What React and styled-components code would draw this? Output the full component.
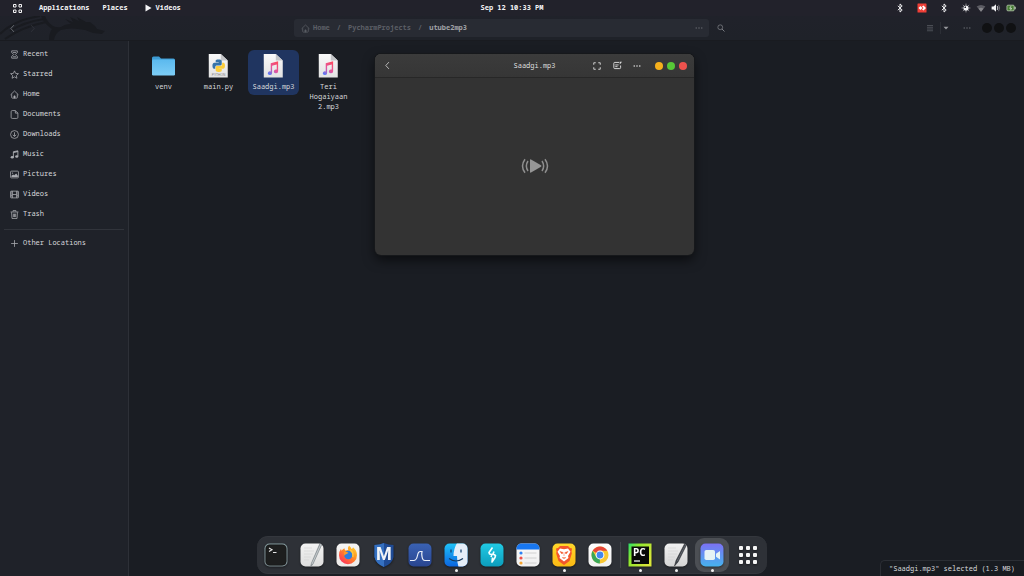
import React, { useState } from 'react';
import styled, { createGlobalStyle } from 'styled-components';

const GlobalStyle = createGlobalStyle`
  * {
    box-sizing: border-box;
  }

  html, body, #root {
    height: 100%;
    margin: 0;
  }

  body {
    background: #1a1d23;
    color: #d6d7da;
    font-family: 'Noto Sans Mono', 'DejaVu Sans Mono', monospace;
    font-size: 7px;
    line-height: 10px;
    overflow: hidden;
  }

  button {
    padding: 0;
    border: none;
    background: none;
    color: inherit;
    font: inherit;
    cursor: pointer;
  }

  a {
    color: inherit;
    text-decoration: none;
  }

  svg {
    display: block;
    flex: none;
  }
`;

const Desktop = styled.div`
  position: relative;
  display: flex;
  flex-direction: column;
  height: 100%;
`;

const TopBar = styled.header`
  display: grid;
  grid-template-columns: 1fr auto 1fr;
  align-items: center;
  height: 16px;
  background: #22222b;
  color: #f4f4f6;
  font-weight: 700;
`;

const TopMenu = styled.nav`
  display: flex;
  align-items: center;
  gap: 13px;
  padding-left: 13px;
`;

const TopButton = styled.button`
  display: flex;
  align-items: center;
  gap: 4px;
  margin-left: ${props => props.$space || 0}px;
`;

const Tray = styled.div`
  display: flex;
  justify-content: flex-end;
  align-items: center;
  gap: ${props => props.$gap}px;
  padding-right: ${props => props.$end || 0}px;
`;

const HeaderBar = styled.div`
  position: relative;
  display: grid;
  grid-template-columns: 294fr 415fr 315fr;
  align-items: center;
  height: 25px;
  background: linear-gradient(#20222a, #1f2229);
  border-bottom: 1px solid #191b20;
  color: #5d6067;
`;

const Dragon = styled.svg`
  position: absolute;
  left: 0;
  top: 0;
`;

const HeaderGroup = styled.div`
  position: relative;
  display: flex;
  align-items: center;
  padding: 0 ${props => props.$end || 2}px 0 2px;
`;

const IconButton = styled.button`
  display: flex;
  align-items: center;
  justify-content: center;
  width: ${props => props.$width || 20}px;
  height: 18px;
  color: ${props => props.$color || 'inherit'};
`;

const Spacer = styled.div`
  flex: 1;
`;

const Divider = styled.span`
  width: 1px;
  height: 12px;
  background: #2c2f36;
`;

const PathBar = styled.nav`
  display: flex;
  align-items: center;
  gap: 7px;
  height: 18px;
  padding-left: 7px;
  border-radius: 3px;
  background: #282b33;
  font-weight: 700;
`;

const Crumb = styled.a`
  display: flex;
  align-items: center;
  gap: 3px;
  color: ${props => (props.$current ? '#a0a2a7' : '#5b5e65')};
`;

const WindowDots = styled.div`
  display: flex;
  gap: ${props => props.$gap}px;
`;

const Dot = styled.button`
  width: ${props => props.$size}px;
  height: ${props => props.$size}px;
  border-radius: 50%;
  background: ${props => props.$color};
`;

const Body = styled.div`
  display: flex;
  flex: 1;
  min-height: 0;
`;

const Sidebar = styled.aside`
  width: 129px;
  padding-top: 3px;
  border-right: 1px solid #2d3037;
  background: #1f2229;
`;

const PlaceList = styled.ul`
  margin: 0;
  padding: 0;
  list-style: none;

  & + & {
    margin: 5px 4px 0;
    padding-top: 3px;
    border-top: 1px solid #31343b;
  }

  & + & a {
    padding-left: 6px;
  }
`;

const PlaceLink = styled.a`
  display: flex;
  align-items: center;
  gap: 4px;
  height: 20px;
  padding-left: 10px;

  svg {
    color: #a9abb0;
  }
`;

const Files = styled.main`
  flex: 1;
  display: flex;
  flex-wrap: wrap;
  align-content: flex-start;
  align-items: flex-start;
  gap: 4px;
  padding: 9px;
`;

const FileButton = styled.button`
  width: 51px;
  padding: 3px 4px;
  border-radius: 6px;
  background: ${props => (props.$selected ? '#203560' : 'transparent')};

  svg {
    margin: 0 auto 4px;
  }
`;

const FileName = styled.span`
  display: block;
  margin: 0 -4px;
  padding: 0 4px;
`;

const PlayerWindow = styled.section`
  position: absolute;
  left: 375px;
  top: 54px;
  width: 319px;
  height: 201px;
  display: flex;
  flex-direction: column;
  border-radius: 6px;
  background: #333333;
  overflow: hidden;
  box-shadow: 0 0 0 1px #16181b, inset 0 1px 0 #444444, 0 5px 12px rgba(0, 0, 0, 0.6);
`;

const PlayerBar = styled.header`
  display: grid;
  grid-template-columns: 1fr auto 1fr;
  align-items: center;
  height: 24px;
  padding: 0 7px 0 2px;
  border-bottom: 1px solid #272727;
  background: linear-gradient(#3b3b3b, #363636);
  color: #dcdcdc;
`;

const PlayerTools = styled.div`
  display: flex;
  align-items: center;
  justify-content: flex-end;

  ${WindowDots} {
    margin-left: 8px;
  }
`;

const PlayerTitle = styled.h1`
  margin: 0;
  padding-left: 5px;
  font-size: 7px;
  font-weight: 400;
`;

const Stage = styled.div`
  display: flex;
  flex: 1;
  align-items: center;
  justify-content: center;
  padding-bottom: 2px;
`;

const Dock = styled.nav`
  position: absolute;
  left: 0;
  right: 0;
  bottom: 2px;
  display: flex;
  align-items: center;
  gap: 2px;
  width: fit-content;
  height: 38px;
  margin: 0 auto;
  padding: 0 2px;
  border: 1px solid #34373d;
  border-width: 1px 0;
  border-radius: 11px;
  background: #2e3137;
`;

const DockButton = styled.button`
  position: relative;
  display: flex;
  align-items: center;
  justify-content: center;
  width: 34px;
  height: 34px;
  border-radius: 9px;
  background: ${props => (props.$active ? '#4c4f54' : 'transparent')};

  svg {
    filter: drop-shadow(0 1px 1px rgba(0, 0, 0, 0.45));
  }
`;

const Running = styled.span`
  position: absolute;
  bottom: 0;
  left: 50%;
  width: 3px;
  height: 3px;
  margin-left: -1px;
  border-radius: 50%;
  background: #f2f2f2;
`;

const DockDivider = styled.span`
  width: 1px;
  height: 26px;
  margin-left: 1px;
  background: #43464b;
`;

const Status = styled.div`
  position: absolute;
  right: 0;
  bottom: 0;
  height: 16px;
  padding: 3px 9px 0 8px;
  border: 1px solid #2b2e34;
  border-width: 1px 0 0 1px;
  border-top-left-radius: 5px;
  background: #181b20;
`;

/* small symbolic icons, all on a 16 unit grid */
const Glyph = ({ size = 9, children }) => (
  <svg width={size} height={size} viewBox="0 0 16 16" fill="none" stroke="currentColor" strokeWidth="1.4" aria-hidden="true">
    {children}
  </svg>
);

const HouseShape = () => (
  <>
    <path d="M1 8.500 8 1.800l7 6.700M3 7.500V13q0 1.500 1.500 1.500h7Q13 14.500 13 13V7.500" />
    <path d="M7 14V10.500h2V14z" fill="currentColor" />
  </>
);

const DotsShape = () => (
  <g fill="currentColor" stroke="none">
    <circle cx="2.500" cy="8" r="1.6" />
    <circle cx="8" cy="8" r="1.6" />
    <circle cx="13.500" cy="8" r="1.6" />
  </g>
);

const places = [
  { name: 'Recent', icon: <path d="M3 1.500h10v3L9.500 8l3.500 3.500v3H3v-3L6.500 8 3 4.500zM5 4.500h6M5 12h6" /> },
  { name: 'Starred', icon: <path d="m8 1.500 2 4.500 5 .5-3.700 3.300 1 4.900L8 12.200l-4.300 2.500 1-4.900L1 6.500 6 6z" /> },
  { name: 'Home', icon: <HouseShape /> },
  { name: 'Documents', icon: <path d="M2 3q0-2 2-2h5.500L14 5.500V13q0 2-2 2H4q-2 0-2-2zM9.500 1v4.500H14" /> },
  {
    name: 'Downloads',
    icon: (
      <>
        <circle cx="8" cy="8" r="7" />
        <path d="M8 4v7M5 8.500l3 3 3-3" />
      </>
    ),
  },
  {
    name: 'Music',
    icon: (
      <>
        <path d="M6 12.500V3l8-1.500V11" strokeWidth="1.600" />
        <path d="M6 4.500l8-2" strokeWidth="2" />
        <ellipse cx="4" cy="13" rx="2.800" ry="2.200" fill="currentColor" stroke="none" />
        <ellipse cx="12" cy="11.500" rx="2.800" ry="2.200" fill="currentColor" stroke="none" />
      </>
    ),
  },
  {
    name: 'Pictures',
    icon: (
      <>
        <rect x="1" y="2" width="14" height="12" rx="1.500" />
        <path d="M2.500 12.500V10l3-2 2 1.500L11 6l3 4v2.500z" fill="currentColor" stroke="none" />
        <circle cx="4.500" cy="5.500" r="1.200" fill="currentColor" stroke="none" />
      </>
    ),
  },
  {
    name: 'Videos',
    icon: (
      <>
        <rect x="1" y="2" width="14" height="12" rx="1" />
        <path d="M4.500 2v12M11.500 2v12M4.500 8h7" />
        <path d="M2.500 2.500v11M13.500 2.500v11" strokeWidth="2" strokeDasharray="2 1.500" />
      </>
    ),
  },
  { name: 'Trash', icon: <path d="M1 3.500h14M5.500 3V1h5v2M2.800 4l.7 11h9l.7-11M6 6.500v6M8 6.500v6M10 6.500v6" /> },
];

const Bluetooth = () => (
  <Glyph size={10}>
    <path d="m4.500 4.500 7 6.800L8 14.500v-13l3.500 3.200-7 6.800" strokeWidth="1.500" />
  </Glyph>
);

const SheetShape = ({ id }) => (
  <>
    <defs>
      <linearGradient id={id} x1="0" y1="0" x2="0" y2="1">
        <stop offset="0" stopColor="#f9f9f9" />
        <stop offset="1" stopColor="#e2e2e2" />
      </linearGradient>
    </defs>
    <path d="M2 1H15l7.500 7v18.500H2z" fill={`url(#${id})`} />
    <path d="M15 1v7h7.500z" fill="#c4c5c8" />
  </>
);

const FolderIcon = () => (
  <svg width="25" height="25" viewBox="0 0 25 25">
    <defs>
      <linearGradient id="folder" x1="0" y1="0" x2="0" y2="1">
        <stop offset="0" stopColor="#5bb9ee" />
        <stop offset="1" stopColor="#7dcdf6" />
      </linearGradient>
    </defs>
    <path d="M1 5q0-1.500 1.500-1.500H8l2 2h12.500Q24 5.500 24 7v5H1z" fill="#3d9bd3" />
    <rect x="1" y="6.500" width="23" height="16" rx="1.200" fill="url(#folder)" />
  </svg>
);

const snake =
  'M14.25.18l.9.2.73.26.59.3.45.32.34.34.25.34.16.33.1.3.04.26.02.2-.01.13V8.5l-.05.63-.13.55-.21.46-.26.38-.3.31-.33.25-.35.19-.35.14-.33.1-.3.07-.26.04-.21.02H8.77l-.69.05-.59.14-.5.22-.41.27-.33.32-.27.35-.2.36-.15.37-.1.35-.07.32-.04.27-.02.21v3.06H3.17l-.21-.03-.28-.07-.32-.12-.35-.18-.36-.26-.36-.36-.35-.46-.32-.59-.28-.73-.21-.88-.14-1.05-.05-1.23.06-1.22.16-1.04.24-.87.32-.71.36-.57.4-.44.42-.33.42-.24.4-.16.36-.1.32-.05.24-.01h.16l.06.01h8.16v-.83H6.18l-.01-2.75-.02-.37.05-.34.11-.31.17-.28.25-.26.31-.23.38-.2.44-.18.51-.15.58-.12.64-.1.71-.06.77-.04.84-.02 1.27.05z';

const PythonIcon = () => (
  <svg width="25" height="25" viewBox="0 0 25 27">
    <SheetShape id="sheet-py" />
    <g transform="translate(6 7) scale(.56)">
      <path d={snake} fill="#3674a9" />
      <path d={snake} fill="#fbce3b" transform="rotate(180 12 12)" />
    </g>
    <text x="12.500" y="24.800" fontSize="3.500" textAnchor="middle" fill="#808080" fontFamily="Liberation Sans">PYTHON</text>
  </svg>
);

const SongIcon = ({ id }) => (
  <svg width="25" height="25" viewBox="0 0 25 27">
    <SheetShape id={`sheet-${id}`} />
    <defs>
      <linearGradient id={`note-${id}`} x1="0.800" y1="0" x2="0.200" y2="1">
        <stop offset="0" stopColor="#fb4c62" />
        <stop offset="0.550" stopColor="#e3559f" />
        <stop offset="1" stopColor="#5578f8" />
      </linearGradient>
    </defs>
    <path
      d="M9.500 11 17.500 9v10.700a2.300 2 0 1 1-1.500-1.800v-5.400L11 13.700v8a2.300 2 0 1 1-1.500-1.800z"
      fill={`url(#note-${id})`}
    />
  </svg>
);

const files = [
  { name: 'venv', icon: <FolderIcon /> },
  { name: 'main.py', icon: <PythonIcon /> },
  { name: 'Saadgi.mp3', icon: <SongIcon id="a" /> },
  { name: 'Teri Hogaiyaan 2.mp3', icon: <SongIcon id="b" /> },
];

const AppIcon = ({ id, from, to, children }) => (
  <svg width="24" height="24" viewBox="0 0 24 24" fill="none" aria-hidden="true">
    <defs>
      <linearGradient id={id} x1="0" y1="0" x2="0" y2="1">
        <stop offset="0" stopColor={from} />
        <stop offset="1" stopColor={to} />
      </linearGradient>
      <clipPath id={`${id}-clip`}>
        <rect x="0.500" y="0.500" width="23" height="23" rx="5" />
      </clipPath>
    </defs>
    <g clipPath={`url(#${id}-clip)`}>
      <rect width="24" height="24" fill={`url(#${id})`} />
      {children}
    </g>
  </svg>
);

const PaperLines = () => (
  <path d="M4 5h8M4 8h10M4 11h9M4 14h7M4 17h5" stroke="#cfcfcf" strokeWidth="0.500" />
);

const dockApps = [
  {
    name: 'Terminal',
    icon: (
      <AppIcon id="term" from="#8aa1a5" to="#7b8b8f">
        <rect x="1.800" y="1.800" width="20.400" height="20.400" rx="4" fill="#1d1e1e" stroke="#151515" strokeWidth="0.600" />
        <path d="m5 5 3 1.700L5 8.400M9 9.500h3.500" stroke="#e4e4e4" strokeWidth="1.100" />
      </AppIcon>
    ),
  },
  {
    name: 'Notes Editor',
    icon: (
      <AppIcon id="edit1" from="#f4f4f4" to="#dddddd">
        <PaperLines />
        <path d="M22.500 0 13 21l-2.500 3 1-4L20.500-1z" fill="#9ba2a5" stroke="#6f777c" strokeWidth="0.500" />
        <path d="M21 1 12 21" stroke="#d4dadd" strokeWidth="0.700" />
      </AppIcon>
    ),
  },
  {
    name: 'Firefox',
    icon: (
      <AppIcon id="fox" from="#f6f5f4" to="#ece9e7">
        <defs>
          <linearGradient id="flame" x1="1" y1="0" x2="0.200" y2="1">
            <stop offset="0" stopColor="#ffe13b" />
            <stop offset="0.450" stopColor="#ff9420" />
            <stop offset="1" stopColor="#ff2d5c" />
          </linearGradient>
        </defs>
        <path d="M13 2.500q2 1.500 2.500 3.500 1.500-.5 1.500-1.800 4 3 4 8a9 9 0 1 1-18 0q0-4 2-6.500l.5 2Q7 6 8.500 5.200q0 1.500.8 2.300 2-.2 3-.7Q11.500 4.500 13 2.500z" fill="url(#flame)" />
        <circle cx="12.300" cy="12" r="4.200" fill="#2b7de0" />
        <path d="M8 9q2.500-1 4.500 1l-2.500 1.300q-1.500.5-1.800 1.700z" fill="#ff9a25" />
        <path d="M14 7q3.800 2 2.800 7" stroke="#ffc83b" strokeWidth="1.500" />
      </AppIcon>
    ),
  },
  {
    name: 'Metasploit',
    icon: (
      <svg width="24" height="24" viewBox="0 0 24 24">
        <path d="M2.500 2Q7.500 2 12 0q4.500 2 9.500 2v12q-1 6.500-9.500 10Q3.500 20.500 2.500 14z" fill="#1f4b95" />
        <path d="M2.500 2Q7.500 2 12 0v24Q3.500 20.500 2.500 14z" fill="#3570c0" />
        <text x="12" y="17" textAnchor="middle" fontFamily="Roboto" fontWeight="700" fontSize="18" fill="#f1f4f7">M</text>
      </svg>
    ),
  },
  {
    name: 'Wave',
    icon: (
      <AppIcon id="wave" from="#3a62b4" to="#29458f">
        <path d="M2 17.500h3.500q3 0 4-5 .7-4 2.800-4h1.700q-.5 2 0 5 .6 4 3 4H22" stroke="#e9eef8" strokeWidth="1.200" />
      </AppIcon>
    ),
  },
  {
    name: 'Files',
    running: true,
    icon: (
      <AppIcon id="finder" from="#1fc4f9" to="#0b63df">
        <path d="M13 0Q9.500 6 9.500 13H13q0 6 1.500 11H24V0z" fill="#e4edf8" />
        <path d="M7 6.500v3M17 6.500v3" stroke="#164571" strokeWidth="1.300" />
        <path d="M5 15.500q7 5 14 0" stroke="#173c61" strokeWidth="1.200" />
      </AppIcon>
    ),
  },
  {
    name: 'Burp Suite',
    icon: (
      <AppIcon id="burp" from="#21cbe5" to="#0c9cbb">
        <path d="m12.500 4.500-3.500 5 .5 1.500 2.500.5-1 2.500M14 8.500 13 11l2.500 1.500-.5 2-3 4.500.500-4.500" stroke="#f4ffff" strokeWidth="1.600" strokeLinejoin="round" />
      </AppIcon>
    ),
  },
  {
    name: 'Reminders',
    icon: (
      <AppIcon id="todo" from="#fafafa" to="#efefef">
        <rect width="24" height="6.500" fill="#1877f0" />
        <path d="M8.500 10h12M8.500 15h12M8.500 20h12" stroke="#c7c7c7" strokeWidth="0.800" />
        <circle cx="5" cy="10" r="1.600" fill="#2d82f5" />
        <circle cx="5" cy="15" r="1.600" fill="#ef504a" />
        <circle cx="5" cy="20" r="1.600" fill="#f6a431" />
      </AppIcon>
    ),
  },
  {
    name: 'Brave',
    running: true,
    icon: (
      <AppIcon id="brave" from="#ffd72b" to="#fcb914">
        <path d="m8 3 8 0 2 2 2 .5-.5 3 .3 2-2.300 7.500L12 22l-5.500-4-2.300-7.500.3-2-.5-3L6 5z" fill="#f4562b" />
        <path d="m8 5.500 4 .8 4-.8 2.500 3.200-2.500 4.300.5 2-4.500 3.500-4.500-3.500.5-2-2.500-4.300z" fill="#fff" />
        <path d="m8 8.500 3 1-1 1.500zM16 8.500l-3 1 1 1.500zM10 14.500l2 1 2-1M12 9.500v3.500" fill="#f4562b" stroke="#f4562b" strokeWidth="0.500" />
      </AppIcon>
    ),
  },
  {
    name: 'Chrome',
    icon: (
      <AppIcon id="chrome" from="#ffffff" to="#f0f0f0">
        <circle cx="12" cy="12" r="8.500" fill="#f9c732" />
        <path d="M12 12 4.640 7.750A8.500 8.500 0 0 1 19.360 7.750H12z" fill="#e6463a" />
        <path d="M4.640 7.750 8.320 14.120 12 16.200l-.2 4.300A8.500 8.500 0 0 1 4.640 7.750z" fill="#3aa757" />
        <circle cx="12" cy="12" r="4.400" fill="#fff" />
        <circle cx="12" cy="12" r="3.400" fill="#4387ee" />
      </AppIcon>
    ),
  },
  {
    name: 'PyCharm',
    running: true,
    divider: true,
    icon: (
      <svg width="24" height="24" viewBox="0 0 24 24">
        <defs>
          <linearGradient id="charm" x1="0" y1="0" x2="1" y2="0.600">
            <stop offset="0" stopColor="#2be06d" />
            <stop offset="0.350" stopColor="#8ee82f" />
            <stop offset="1" stopColor="#d9e63a" />
          </linearGradient>
        </defs>
        <path d="M.5.500h23v23H.5z" fill="url(#charm)" />
        <rect x="3.500" y="3.500" width="17.500" height="17.500" fill="#080a08" />
        <text x="5" y="13" fontFamily="Open Sans" fontWeight="700" fontSize="10" fill="#fff">PC</text>
        <path d="M6 18h6" stroke="#fff" strokeWidth="1.200" />
      </svg>
    ),
  },
  {
    name: 'Text Editor',
    running: true,
    icon: (
      <AppIcon id="edit2" from="#f2f2f2" to="#d4d4d4">
        <PaperLines />
        <path d="M24-1 14 19l-3.500 4L12 17.500 21.500-1z" fill="#3b3f45" stroke="#24272b" strokeWidth="0.500" />
        <path d="M22.500 0 13 18.500" stroke="#7c8289" strokeWidth="0.600" />
      </AppIcon>
    ),
  },
  {
    name: 'Videos',
    running: true,
    active: true,
    icon: (
      <AppIcon id="video" from="#7d70f4" to="#45b4ee">
        <rect x="4.500" y="7" width="10.500" height="10" rx="1.800" fill="#e5f3f5" />
        <path d="M16 10.800 20 8v8.500l-4-2.800z" fill="#e5f3f5" />
      </AppIcon>
    ),
  },
  {
    name: 'Show Applications',
    icon: (
      <svg width="24" height="24" viewBox="0 0 24 24" fill="#f5f5f5">
        {[3, 10, 17].map(y => [3, 10, 17].map(x => (
          <rect key={`${x}-${y}`} x={x} y={y} width="4" height="4" rx="1" />
        )))}
      </svg>
    ),
  },
];

const TopPanel = () => (
  <TopBar>
    <TopMenu>
      <TopButton aria-label="Overview">
        <svg width="9" height="9" viewBox="0 0 9 9" fill="none" stroke="currentColor">
          <path d="M.5.500h2.500v2.500H.5zM6 .500h2.500v2.500H6zM.5 6h2.500v2.500H.5zM6 6h2.500v2.500H6z" />
        </svg>
      </TopButton>
      <TopButton $space={4}>Applications</TopButton>
      <TopButton>Places</TopButton>
      <TopButton $space={4}>
        <svg width="7" height="8" viewBox="0 0 7 8" fill="currentColor">
          <path d="M.5.500 6.500 4l-6 3.500z" />
        </svg>
        Videos
      </TopButton>
    </TopMenu>
    <time>Sep 12 10:33 PM</time>
    <Tray $gap={12} $end={8}>
      <Tray $gap={12}>
        <Bluetooth />
        <svg width="10" height="10" viewBox="0 0 10 10">
          <rect x="0.500" y="0.500" width="9" height="9" rx="0.500" fill="#ef3e36" />
          <path d="m1.500 5 2-2 2 2-2 2z" fill="#fff" />
          <path d="m5 3.500 1.500-1L9 5 6.500 7.500 5 6.500 6.500 5z" fill="#fff" />
        </svg>
        <Bluetooth />
      </Tray>
      <Tray $gap={5}>
        <Glyph size={10}>
          <circle cx="8" cy="8" r="4.200" fill="currentColor" stroke="none" />
          <path d="M8 1v2M8 13v2M1 8h2M13 8h2M3 3l1.500 1.500M11.500 11.500 13 13M13 3l-1.500 1.500M3 13l1.500-1.500" stroke="#a5a5aa" />
          <path d="M8 8V5.300q-2.700 0-2.700 2.700z" fill="#22222b" stroke="none" />
        </Glyph>
        <Glyph size={10}>
          <path d="M1 5.500q7-5 14 0L8 14z" fill="#5c5c63" stroke="none" />
          <path d="M4 9q4-2.500 8 0l-4 5z" fill="#85858a" stroke="none" />
        </Glyph>
        <Glyph size={10}>
          <path d="M1 5.500h3L8 2v12l-4-3.500H1z" fill="currentColor" stroke="none" />
          <path d="M10 5q2 3 0 6" />
          <path d="M12 3q4 5 0 10" stroke="#77777d" />
        </Glyph>
        <Glyph size={10}>
          <rect x="1.500" y="3.500" width="11.500" height="9" rx="1.500" fill="#467c34" strokeWidth="1.200" stroke="#c3d3b9" />
          <path d="M14.500 6v4" strokeWidth="2" stroke="#c3d3b9" />
          <path d="M8 5 6 8.500h3L7 11.500" stroke="#fff" strokeWidth="1" />
        </Glyph>
      </Tray>
    </Tray>
  </TopBar>
);

const FilesHeader = () => (
  <HeaderBar>
    <Dragon width="108" height="24" viewBox="0 0 108 24" aria-hidden="true">
      <path d="M0 18Q14 4 40 0M5 23Q22 11 46 6M10 15Q24 6 44 3" fill="none" stroke="#191b20" strokeWidth="2" />
      <path d="M41 0h4q3 7 8 10 4 2 8 1 4-3 10-3L65 3l8 3-3-5 9 4-2-4 9 5 4 0 5 4 2 3 8 2-3 3-9-1-8-3q-14-3-24 0-6 3-7 10h-5q0-7 3-11-8-5-11-13z" fill="#191b20" />
    </Dragon>
    <HeaderGroup>
      <IconButton aria-label="Back" $color="#777a80">
        <Glyph><path d="M10.500 2 5 8l5.500 6" /></Glyph>
      </IconButton>
      <IconButton aria-label="Forward" $color="#33363d">
        <Glyph><path d="M5.500 2 11 8l-5.500 6" /></Glyph>
      </IconButton>
    </HeaderGroup>
    <PathBar aria-label="Path">
      <Crumb href="#home"><Glyph><HouseShape /></Glyph>Home</Crumb>
      <span>/</span>
      <Crumb href="#projects">PycharmProjects</Crumb>
      <span>/</span>
      <Crumb href="#utube2mp3" $current>utube2mp3</Crumb>
      <Spacer />
      <IconButton aria-label="Path options"><Glyph size={8}><DotsShape /></Glyph></IconButton>
    </PathBar>
    <HeaderGroup $end={8}>
      <IconButton aria-label="Search" $color="#85878c">
        <Glyph size={8}>
          <circle cx="6.500" cy="6.500" r="4.800" />
          <path d="m10 10 5 5" strokeWidth="1.800" />
        </Glyph>
      </IconButton>
      <Spacer />
      <IconButton aria-label="List view">
        <Glyph size={8}><path d="M2 3h12M2 6.500h12M2 10h12M2 13.500h12" /></Glyph>
      </IconButton>
      <Divider />
      <IconButton aria-label="View options" $width={10} $color="#96989c">
        <Glyph size={8}><path d="M3 5.500h10L8 11z" fill="currentColor" stroke="none" /></Glyph>
      </IconButton>
      <IconButton aria-label="Menu" $width={31}><Glyph size={8}><DotsShape /></Glyph></IconButton>
      <WindowDots $gap={2}>
        <Dot aria-label="Minimize" $size={10} $color="#101113" />
        <Dot aria-label="Maximize" $size={10} $color="#101113" />
        <Dot aria-label="Close" $size={10} $color="#101113" />
      </WindowDots>
    </HeaderGroup>
  </HeaderBar>
);

const Player = ({ title }) => (
  <PlayerWindow>
    <PlayerBar>
      <IconButton aria-label="Back">
        <Glyph><path d="M10.500 2 5 8l5.500 6" /></Glyph>
      </IconButton>
      <PlayerTitle>{title}</PlayerTitle>
      <PlayerTools>
        <IconButton aria-label="Fullscreen">
          <Glyph size={8}><path d="M1.500 5.500v-4h4M10.500 1.500h4v4M14.500 10.500v4h-4M5.500 14.500h-4v-4" strokeWidth="1.800" /></Glyph>
        </IconButton>
        <IconButton aria-label="Subtitles">
          <Glyph>
            <path d="M11 2.500H3Q1.500 2.500 1.500 4v8q0 1.500 1.500 1.500h9q1.500 0 1.500-1.500V8" strokeWidth="1.700" />
            <path d="M4 7h6M4 10h4" strokeWidth="1.600" />
            <path d="M12 1.500h4L12 6z" fill="currentColor" stroke="none" />
          </Glyph>
        </IconButton>
        <IconButton aria-label="Menu"><Glyph size={8}><DotsShape /></Glyph></IconButton>
        <WindowDots $gap={4}>
          <Dot aria-label="Minimize" $size={8} $color="#f6b01c" />
          <Dot aria-label="Maximize" $size={8} $color="#57c837" />
          <Dot aria-label="Close" $size={8} $color="#ee524d" />
        </WindowDots>
      </PlayerTools>
    </PlayerBar>
    <Stage>
      <svg width="28" height="16" viewBox="0 0 28 16" fill="none" stroke="#8e8e8e" strokeWidth="1.500">
        <path d="M9 2q0-1 1-.5l10 5.700q1 .8 0 1.600l-10 5.700q-1 .5-1-.5z" fill="#969696" stroke="none" />
        <path d="M4 1.200q-5 6.800 0 13.600M7 3q-3.300 5 0 10" />
        <path d="M24 1.200q5 6.800 0 13.600M21 3q3.300 5 0 10" />
      </svg>
    </Stage>
  </PlayerWindow>
);

const App = () => {
  const [selected, setSelected] = useState('Saadgi.mp3');

  return (
    <>
      <GlobalStyle />
      <Desktop>
        <TopPanel />
        <FilesHeader />
        <Body>
          <Sidebar>
            <PlaceList>
              {places.map(place => (
                <li key={place.name}>
                  <PlaceLink href={`#${place.name}`}>
                    <Glyph>{place.icon}</Glyph>
                    {place.name}
                  </PlaceLink>
                </li>
              ))}
            </PlaceList>
            <PlaceList>
              <li>
                <PlaceLink href="#other">
                  <Glyph><path d="M8 2v12M2 8h12" /></Glyph>
                  Other Locations
                </PlaceLink>
              </li>
            </PlaceList>
          </Sidebar>
          <Files>
            {files.map(file => (
              <FileButton
                key={file.name}
                $selected={file.name === selected}
                onClick={() => setSelected(file.name)}
              >
                {file.icon}
                <FileName>{file.name}</FileName>
              </FileButton>
            ))}
          </Files>
        </Body>
        <Player title="Saadgi.mp3" />
        <Status>"{selected}" selected (1.3 MB)</Status>
        <Dock>
          {dockApps.map(app => (
            <React.Fragment key={app.name}>
              {app.divider && <DockDivider />}
              <DockButton aria-label={app.name} $active={app.active}>
                {app.icon}
                {app.running && <Running />}
              </DockButton>
            </React.Fragment>
          ))}
        </Dock>
      </Desktop>
    </>
  );
};

export default App;
